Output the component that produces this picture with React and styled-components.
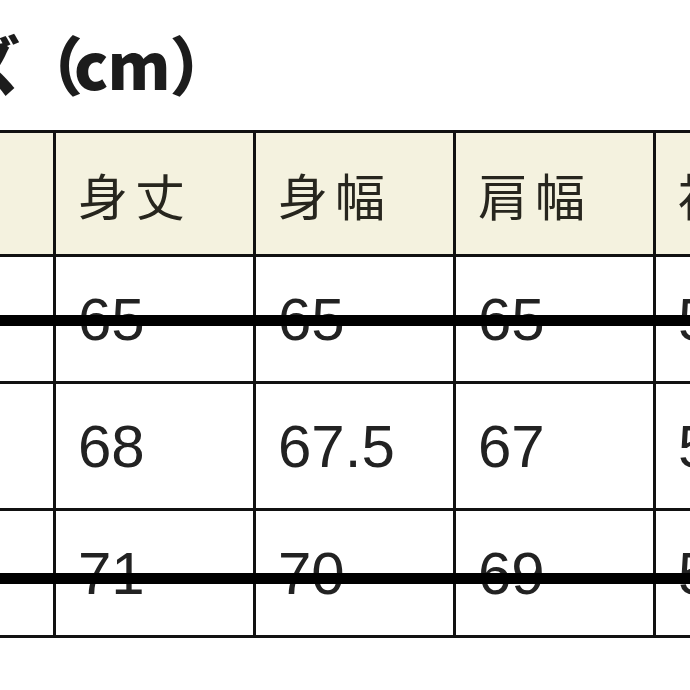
import React from "react";
import styled, { createGlobalStyle } from "styled-components";

const GlobalStyle = createGlobalStyle`
  html, body {
    margin: 0;
    padding: 0;
    background: #ffffff;
    overflow: hidden;
  }
  body {
    width: 690px;
    height: 690px;
  }
`;

const Page = styled.div`
  width: 1200px;
  margin-left: -176px;
`;

const Title = styled.h2`
  margin: 0 0 0 8px;
  height: 130px;
  box-sizing: border-box;
  padding-top: 30px;
  font-family: "Noto Sans CJK JP", "Noto Sans", sans-serif;
  font-weight: 900;
  font-size: 64px;
  letter-spacing: -1px;
  line-height: 1;
  color: #1c1c1c;
  white-space: nowrap;
`;

const Paren = styled.span`
  letter-spacing: -9px;
`;

const Table = styled.div`
  margin-left: 32px;
  display: flex;
  flex-direction: column;
  gap: 3px;
  padding: 3px 0;
  background: #111;
  width: max-content;
`;

const Row = styled.div`
  position: relative;
  display: grid;
  grid-template-columns: repeat(5, 197px);
  column-gap: 3px;
  height: ${({ $header }) => ($header ? 121 : 124)}px;

  ${({ $strike }) =>
    $strike != null &&
    `
    &::after {
      content: "";
      position: absolute;
      left: 0;
      right: 0;
      top: ${$strike}px;
      height: 11px;
      background: #000;
    }
  `}
`;

const Cell = styled.div`
  display: flex;
  align-items: center;
  padding-left: 22px;
  background: ${({ $header }) => ($header ? "#f4f2df" : "#ffffff")};
  color: ${({ $header }) => ($header ? "#27261e" : "#222")};
  font-family: ${({ $header }) =>
    $header
      ? `"Noto Sans CJK JP", "Noto Sans", sans-serif`
      : `"Liberation Sans", Arial, sans-serif`};
  font-size: ${({ $header }) => ($header ? 50 : 60)}px;
  letter-spacing: ${({ $header }) => ($header ? "7px" : "0")};
  white-space: nowrap;
  overflow: hidden;
`;

const headers = ["", "身丈", "身幅", "肩幅", "袖丈"];

const rows = [
  { size: "S", values: ["65", "65", "65", "57"], strike: 58 },
  { size: "M", values: ["68", "67.5", "67", "58"] },
  { size: "L", values: ["71", "70", "69", "59"], strike: 62 },
];

const App = () => (
  <>
    <GlobalStyle />
    <Page>
      <Title>
        サイズ<Paren>（</Paren>cm）
      </Title>
      <Table>
        <Row $header>
          {headers.map((h, i) => (
            <Cell key={i} $header>
              {h}
            </Cell>
          ))}
        </Row>
        {rows.map((r) => (
          <Row key={r.size} $strike={r.strike}>
            <Cell>{r.size}</Cell>
            {r.values.map((v, i) => (
              <Cell key={i}>{v}</Cell>
            ))}
          </Row>
        ))}
      </Table>
    </Page>
  </>
);

export default App;
